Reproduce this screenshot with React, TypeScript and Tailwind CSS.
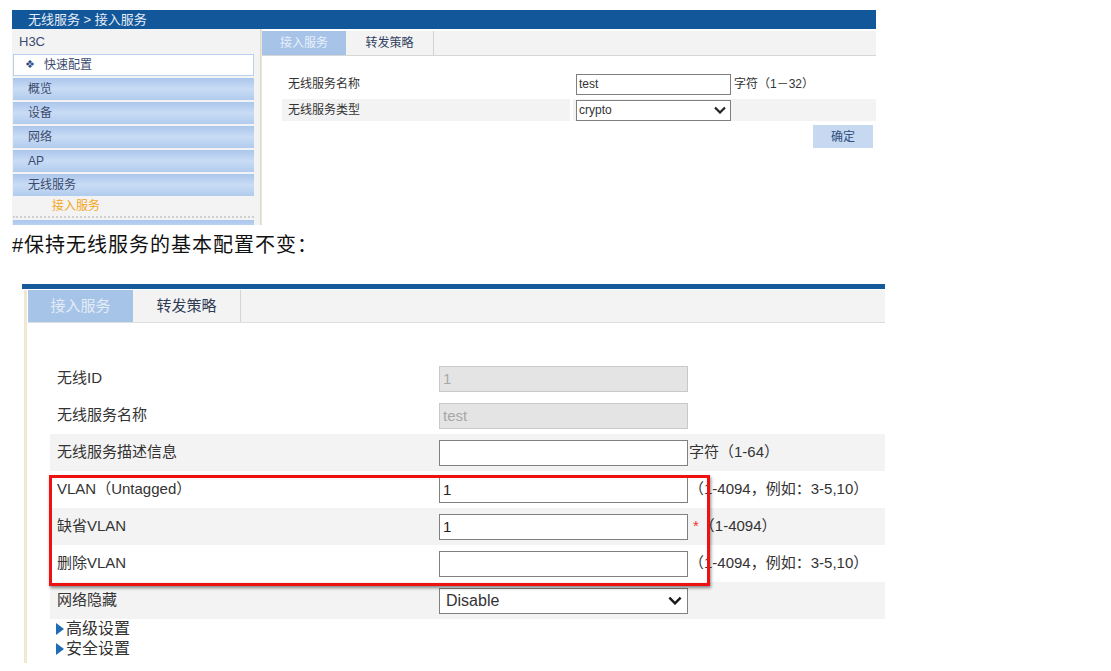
import React from "react"

const font = "font-['Liberation_Sans','Noto_Sans_CJK_SC',sans-serif]"

const navItems = ["概览", "设备", "网络", "AP", "无线服务"]

const Chevron = ({ className }: { className?: string }) => (
  <svg viewBox="0 0 12 8" className={className} fill="none" stroke="currentColor" strokeWidth="2.2">
    <polyline points="1,1.5 6,6.5 11,1.5" />
  </svg>
)

const TopPanel = () => {
  return (
    <div className="ml-[12px] w-[864px] pt-[10px]">
      <div className="h-[19px] bg-[#12579a] pl-[16px] text-[13px] leading-[19px] text-[#e6edf7]">
        无线服务 &gt; 接入服务
      </div>
      <div className="flex h-[196px]">
        {/* left nav */}
        <div className="w-[249px] overflow-hidden border-r border-[#d9d9d9] bg-[#f3f3f3] text-[12px] text-[#3b4b6e]">
          <div className="h-[25px] pl-[7px] pt-[4px] text-[13px] leading-[17px]">H3C</div>
          <div className="ml-[1px] flex h-[22px] w-[241px] items-center border border-[#b9d0ef] bg-white pl-[11px]">
            <span className="font-['DejaVu_Sans'] text-[11px] text-[#2b4c86]">❖</span>
            <span className="ml-[9px]">快速配置</span>
          </div>
          {navItems.map((item) => (
            <div
              key={item}
              className="ml-[1px] mt-[2px] h-[22px] w-[241px] bg-linear-to-b from-[#abc6ec] via-[#c9dcf5] to-[#b1cbee] pl-[15px] leading-[22px]"
            >
              {item}
            </div>
          ))}
          <div className="h-[20px] pl-[40px] leading-[20px] text-[#f5a623]">接入服务</div>
          <div className="ml-[1px] w-[241px] border-t-2 border-dotted border-[#cfcfcf]" />
          <div className="ml-[1px] mt-[2px] h-[22px] w-[241px] bg-linear-to-b from-[#abc6ec] via-[#c9dcf5] to-[#b1cbee]" />
        </div>

        {/* content */}
        <div className="flex-1 border-l border-[#efe6cc] pt-[2px] text-[12px] text-[#333]">
          <div className="flex h-[25px] border-b border-[#d6d6d6] bg-[#f3f3f3]">
            <div className="flex w-[84px] items-center justify-center bg-[#a7c3e8] text-[#e8f0fa]">接入服务</div>
            <div className="flex w-[88px] items-center justify-center border-r border-[#d2d2d2] text-[#2f3f5f]">转发策略</div>
          </div>
          <div className="pl-[20px]">
            <div className="mt-[16px] flex h-[24px] items-center">
              <div className="w-[288px] pl-[6px]">无线服务名称</div>
              <div className="ml-[3px] flex items-center pl-[3px]">
                <div className="h-[21px] w-[155px] border border-[#7f7f7f] bg-white pl-[2px] leading-[19px]">test</div>
                <span className="ml-[3px]">字符（1－32）</span>
              </div>
            </div>
            <div className="mt-[3px] flex h-[22px]">
              <div className="flex w-[288px] items-center bg-[#f3f3f3] pl-[6px]">无线服务类型</div>
              <div className="ml-[3px] flex flex-1 items-center bg-[#f3f3f3] pl-[3px]">
                <div className="flex h-[21px] w-[155px] items-center justify-between border border-[#7f7f7f] bg-white pl-[2px] pr-[4px]">
                  <span>crypto</span>
                  <Chevron className="h-[8px] w-[12px] text-[#222]" />
                </div>
              </div>
            </div>
            <div className="mt-[4px] flex justify-end pr-[3px]">
              <div className="flex h-[23px] w-[60px] items-center justify-center bg-[#c6d9f1] text-[#2f4f80]">确定</div>
            </div>
          </div>
        </div>
      </div>
    </div>
  )
}

type Row = {
  label: string
  value: string
  kind: "disabled" | "input" | "select"
  note?: string
  required?: boolean
  gray?: boolean
}

const rows: Row[] = [
  { label: "无线ID", value: "1", kind: "disabled" },
  { label: "无线服务名称", value: "test", kind: "disabled" },
  { label: "无线服务描述信息", value: "", kind: "input", note: "字符（1-64）", gray: true },
  { label: "VLAN（Untagged）", value: "1", kind: "input", note: "（1-4094，例如：3-5,10）" },
  { label: "缺省VLAN", value: "1", kind: "input", note: "（1-4094）", required: true, gray: true },
  { label: "删除VLAN", value: "", kind: "input", note: "（1-4094，例如：3-5,10）" },
  { label: "网络隐藏", value: "Disable", kind: "select", gray: true },
]

const FormRow = ({ row }: { row: Row }) => {
  return (
    <div className={`flex h-[37px] items-center ${row.gray ? "bg-[#f3f3f3]" : ""}`}>
      <div className="w-[389px] pl-[7px]">{row.label}</div>
      {row.kind === "disabled" && (
        <div className="h-[26px] w-[249px] border border-[#c9c9c9] bg-[#e4e4e4] pl-[3px] leading-[24px] text-[#a8a8a8]">
          {row.value}
        </div>
      )}
      {row.kind === "input" && (
        <div className="h-[26px] w-[249px] border border-[#808080] bg-white pl-[3px] leading-[24px] text-[#222]">
          {row.value}
        </div>
      )}
      {row.kind === "select" && (
        <div className="flex h-[26px] w-[249px] items-center justify-between border border-[#808080] bg-white pl-[6px] pr-[5px] text-[16px] text-[#333]">
          <span>{row.value}</span>
          <Chevron className="h-[9px] w-[14px] text-[#1b1b1b]" />
        </div>
      )}
      {row.required && <span className="ml-[5px] text-[#e33]">*</span>}
      {row.note && <span className="ml-[1px]">{row.note}</span>}
    </div>
  )
}

const BottomPanel = () => {
  return (
    <div className="relative ml-[22px] mt-[27px] w-[863px] text-[15px] text-[#333]">
      <div className="h-[5px] bg-[#165a9b]" />
      <div className="pl-[2px] pt-[1px]">
        <div className="border-l-[3px] border-[#f1e9cf] pb-[4px] pl-[1px]">
          <div className="flex h-[33px] border-b border-[#dedede] bg-[#f3f3f3]">
            <div className="flex w-[105px] items-center justify-center bg-[#a6c3e8] text-[#e4ecf7]">接入服务</div>
            <div className="flex w-[108px] items-center justify-center border-r border-[#d4d4d4] text-[#2f3b55]">转发策略</div>
          </div>
          <div className="ml-[22px] mt-[37px]">
            {rows.map((row) => (
              <FormRow key={row.label} row={row} />
            ))}
          </div>
          <div className="ml-[28px] text-[16px]">
            {["高级设置", "安全设置"].map((t) => (
              <div key={t} className="flex h-[20px] items-center">
                <span className="h-0 w-0 border-y-[6px] border-l-[8px] border-y-transparent border-l-[#1e6db5]" />
                <span className="ml-[2px] leading-[20px]">{t}</span>
              </div>
            ))}
          </div>
        </div>
      </div>
      {/* highlight box */}
      <div className="absolute left-[27px] top-[191px] h-[111px] w-[661px] border-[3px] border-[#ee1111] shadow-[1px_2px_3px_rgba(0,0,0,0.45)]" />
    </div>
  )
}

export default function App() {
  return (
    <div className={`h-[671px] w-[1111px] overflow-hidden bg-white ${font}`}>
      <TopPanel />
      <div className="mt-[8px] h-[24px] pl-[12px] text-[20px] leading-[24px] tracking-[1px] text-[#111]">#保持无线服务的基本配置不变：</div>
      <BottomPanel />
    </div>
  )
}
